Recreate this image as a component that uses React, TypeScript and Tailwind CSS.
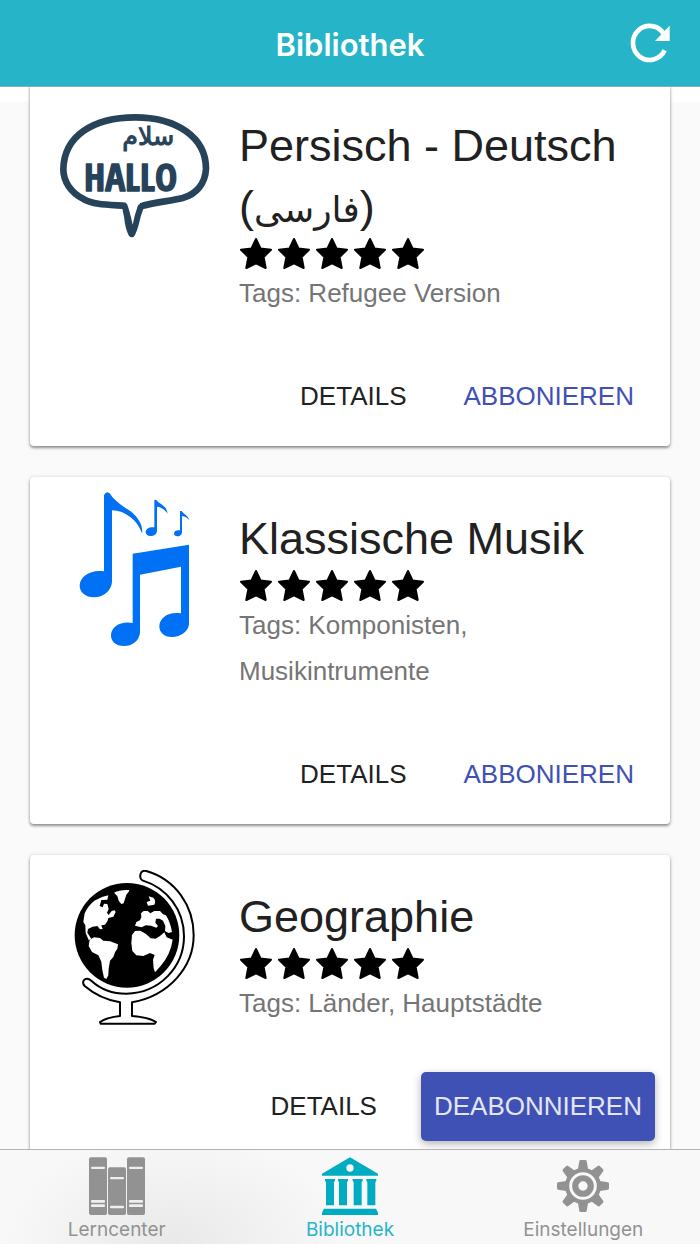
/**
 * Library screen: list of card decks that can be subscribed to.
 */

import type { ReactNode } from 'react';

interface Deck {
  title: string;
  nativeName?: string;
  tags: string;
  subscribed: boolean;
  picture: ReactNode;
}

interface Tab {
  label: string;
  href: string;
  active: boolean;
  icon: ReactNode;
}

function HelloPicture() {
  return (
    <svg viewBox="60 -3 450 480" className="h-40 w-[150px]" role="img" aria-label="Hallo">
      <path
        fill="none"
        stroke="#27435a"
        strokeWidth="20"
        strokeLinejoin="round"
        d="M258 318 C205 314 160 314 132 298 C92 278 70 244 70 208 C72 108 160 52 285 52 C410 52 498 112 498 206 C496 250 470 282 428 294 C388 304 345 306 302 319"
      />
      <path
        fill="#27435a"
        d="M244 312 Q253 306 261 312 Q268 328 278 374 Q284 344 294 316 Q300 308 312 314 Q310 330 302 350 Q290 402 281 410 Q274 415 267 408 Q256 388 252 350 Z"
      />
      <text
        x="272"
        y="272"
        textAnchor="middle"
        fill="#27435a"
        stroke="#27435a"
        strokeWidth="4"
        strokeLinejoin="round"
        fontSize="112"
        fontWeight="700"
        fontFamily="'Liberation Sans Narrow', 'Open Sans Condensed', 'DejaVu Sans Condensed', sans-serif"
      >
        HALLO
      </text>
      <text
        x="325"
        y="134"
        textAnchor="middle"
        fill="#27435a"
        stroke="#27435a"
        strokeWidth="3"
        fontSize="76"
        fontFamily="'DejaVu Sans', sans-serif"
      >
        سلام
      </text>
    </svg>
  );
}

function MusicPicture() {
  return (
    <svg viewBox="0 36 450 480" className="h-40 w-[150px]" fill="#0070f5" aria-hidden="true">
      <path d="M132 46 Q134 38 142 37 Q149 38 152 44 C165 64 192 80 212 94 C236 114 250 138 246 160 C232 120 196 92 156 91 L156 306 C154 332 130 352 102 352 C76 352 58 336 59 315 C61 290 90 268 132 274 Z" />
      <path d="M218 221 L387 194 L387 432 C386 454 362 471 336 471 C312 471 297 456 298 437 C300 412 326 394 363 400 L363 260 L240 284 L240 458 C238 482 216 498 192 498 C168 498 152 484 153 464 C155 440 182 422 218 429 Z" />
      <path d="M283 60 L288 59 C297 70 310 74 317 84 Q321 91 323 101 C313 88 303 81 291 80 L291 152 C290 162 282 168 272 168 C262 168 257 163 257 156 C258 146 268 140 283 142 Z" />
      <path d="M360 93 L365 93 C370 102 385 107 388 120 C380 112 374 109 366 108 L366 158 C364 166 358 169 352 169 C346 169 342 165 342 160 C343 153 350 149 360 151 Z" />
    </svg>
  );
}

function GlobePicture() {
  return (
    <svg viewBox="0 30 450 480" className="h-40 w-[150px]" aria-hidden="true">
      <circle cx="201" cy="226" r="157" />
      <path
        fill="#fff"
        stroke="#000"
        strokeWidth="6"
        strokeLinejoin="round"
        d="M247 61 Q239 57 241 45 Q244 30 259 33 C346 58 401 137 401 226 C401 322 326 407 216 427 L216 468 Q265 472 288 486 L284 491 L122 491 L120 486 Q142 472 180 468 L180 427 C139 420 102 402 74 378 Q65 368 73 359 Q82 352 94 362 C122 388 162 401 199 401 C298 399 372 322 372 229 C372 150 322 84 247 61 Z"
      />
      <g fill="#fff">
        <path d="M74 160 Q82 140 103 122 L126 111 L145 106 L142 119 L124 120 L119 138 L128 142 L132 131 L142 132 L146 147 L141 158 L146 165 L155 153 L164 151 L167 156 L160 170 L145 174 L142 184 L135 194 L124 196 L128 207 L120 208 L112 198 L98 200 L84 207 L82 218 L88 227 L94 237 L86 240 L77 219 L76 196 L70 186 Z" />
        <path d="M162 98 Q180 88 208 90 Q207 98 199 104 L191 130 L184 132 L176 122 L172 108 Z" />
        <path d="M89 239 L102 232 L120 234 L130 242 L150 244 L174 253 L172 266 L165 277 L160 291 L150 302 L146 326 L145 346 L139 357 L132 353 L127 331 L124 305 L115 286 L96 276 L86 258 Z" />
        <path d="M266 109 L280 113 Q289 122 283 134 L264 137 L260 126 L271 122 Z" />
        <path d="M225 197 L229 186 L240 181 L244 172 L243 160 L251 153 L263 153 L271 160 L283 153 L300 153 L309 163 L318 166 Q331 187 336 216 L325 219 L315 213 L316 198 L309 182 L299 176 L288 176 L286 188 L294 198 L289 203 L273 197 L258 196 L244 202 Z" />
        <path d="M225 213 L241 212 L257 221 L272 235 L287 236 L300 228 L313 217 L320 232 L338 239 Q332 282 302 318 L285 337 L281 325 L279 299 L284 285 L270 279 L250 288 L229 286 L217 273 L214 250 L216 225 Z" />
      </g>
      <path
        fill="none"
        stroke="#fff"
        strokeWidth="3"
        d="M256 75 C318 96 361 156 361 226 C361 314 288 386 201 388"
      />
    </svg>
  );
}

function BooksIcon() {
  return (
    <svg viewBox="258 48 180 180" className="size-[60px]" fill="#929292" aria-hidden="true">
      <rect x="264" y="52" width="54" height="173" rx="6" />
      <rect x="321" y="82" width="54" height="143" rx="6" />
      <rect x="378" y="52" width="54" height="173" rx="6" />
      <g fill="#efefef">
        <rect x="270" y="80" width="42" height="7" rx="3" />
        <rect x="270" y="180" width="42" height="8" rx="3" />
        <rect x="270" y="193" width="42" height="8" rx="3" />
        <rect x="327" y="111" width="42" height="7" rx="3" />
        <rect x="327" y="197" width="42" height="8" rx="3" />
        <rect x="384" y="80" width="42" height="7" rx="3" />
        <rect x="384" y="180" width="42" height="8" rx="3" />
        <rect x="384" y="193" width="42" height="8" rx="3" />
      </g>
    </svg>
  );
}

function MuseumIcon() {
  const columns = [135, 174, 218, 259];

  return (
    <svg viewBox="120 48 180 180" className="size-[60px]" fill="#00acc1" aria-hidden="true">
      <path d="M210 52 L294 101 L294 107 L126 107 L126 101 Z" />
      <circle cx="210" cy="84" r="11" fill="#f8f8f8" />
      {columns.map(x => (
        <path key={x} d={`M${x} 117 h30 v5 l-3 5 v69 h-24 v-69 l-3 -5 Z`} />
      ))}
      <path d="M132 206 H288 L294 218 V225 H126 V218 Z" />
    </svg>
  );
}

function GearIcon() {
  const teeth = [0, 45, 90, 135, 180, 225, 270, 315];

  return (
    <svg viewBox="159 48 180 180" className="size-[60px]" fill="#929292" aria-hidden="true">
      {teeth.map(angle => (
        <path
          key={angle}
          d="M233 92 L238 63 Q239 60 242 60 H256 Q259 60 260 63 L265 92 Z"
          transform={`rotate(${angle} 249 138)`}
        />
      ))}
      <circle cx="249" cy="138" r="54" />
      <circle cx="249" cy="138" r="37" fill="none" stroke="#f8f8f8" strokeWidth="9" />
      <circle cx="249" cy="138" r="14" fill="#f8f8f8" />
    </svg>
  );
}

function Stars() {
  return (
    <div className="flex h-[33px] gap-[5px]" role="img" aria-label="5 Sterne">
      {[1, 2, 3, 4, 5].map(n => (
        <svg key={n} viewBox="0 0 33 33" className="size-[33px]">
          <path
            stroke="#000"
            strokeWidth="2"
            strokeLinejoin="round"
            d="M17 2 L21.5 11.5 L32 12.7 L24.6 20 L26.7 31 L17 26.4 L7.3 31 L9.4 20 L2 12.7 L12.5 11.5 Z"
          />
        </svg>
      ))}
    </div>
  );
}

const DECKS: Deck[] = [
  {
    title: 'Persisch - Deutsch',
    nativeName: 'فارسی',
    tags: 'Refugee Version',
    subscribed: false,
    picture: <HelloPicture />,
  },
  {
    title: 'Klassische Musik',
    tags: 'Komponisten, Musikintrumente',
    subscribed: false,
    picture: <MusicPicture />,
  },
  {
    title: 'Geographie',
    tags: 'Länder, Hauptstädte',
    subscribed: true,
    picture: <GlobePicture />,
  },
];

const TABS: Tab[] = [
  { label: 'Lerncenter', href: '#lerncenter', active: false, icon: <BooksIcon /> },
  { label: 'Bibliothek', href: '#bibliothek', active: true, icon: <MuseumIcon /> },
  { label: 'Einstellungen', href: '#einstellungen', active: false, icon: <GearIcon /> },
];

function DeckCard({ deck }: { deck: Deck }) {
  return (
    <article className="rounded-[4px] bg-white pb-[15px] shadow-[0_2px_3px_rgba(0,0,0,0.4),0_0_4px_rgba(0,0,0,0.12)]">
      <div className="flex items-start gap-[29px] px-[30px]">
        <div className="h-0 shrink-0 pt-[15px]">{deck.picture}</div>
        <div className="min-w-0 flex-1 pt-[31px]">
          <h2 className="text-[45px] leading-[61px] text-[#212121]">
            {deck.title}
            {deck.nativeName && (
              <>
                {' '}
                <span className="whitespace-nowrap">
                  (<bdi className="text-[36px] leading-none">{deck.nativeName}</bdi>)
                </span>
              </>
            )}
          </h2>
          <Stars />
          <p className="text-[26px] leading-[46px] text-[#757575]">{`Tags: ${deck.tags}`}</p>
        </div>
      </div>

      {/* Actions */}
      <div className="mt-[46px] flex justify-end gap-8 pr-[15px] text-[26px]">
        <button type="button" className="h-[69px] px-3 text-[#212121]">
          DETAILS
        </button>
        {deck.subscribed ? (
          <button
            type="button"
            className="h-[69px] rounded-[5px] bg-[#3f51b5] px-[13px] text-[#e3e6f5] shadow-[0_3px_8px_rgba(0,0,0,0.3)]"
          >
            DEABONNIEREN
          </button>
        ) : (
          <button type="button" className="mr-2 h-[69px] px-[13px] text-[#3f51b5]">
            ABBONIEREN
          </button>
        )}
      </div>
    </article>
  );
}

export default function App() {
  return (
    <div className="flex h-screen flex-col bg-white font-['Liberation_Sans','DejaVu_Sans',sans-serif]">
      <header className="z-10 grid h-[87px] shrink-0 grid-cols-[1fr_auto_1fr] items-center border-b border-[#8fa9ad] bg-[#26b5c8] px-[30px] font-['Inter',sans-serif] text-white">
        <h1 className="col-start-2 pt-1 text-[31px] font-semibold">Bibliothek</h1>
        <button type="button" aria-label="Aktualisieren" className="justify-self-end">
          <svg viewBox="28 36 120 120" className="size-10">
            <path
              fill="none"
              stroke="#fff"
              strokeWidth="14"
              d="M132 118 A50 51 0 1 1 130 70"
            />
            <path fill="#fff" d="M147 44 V90 H103 Z" />
          </svg>
        </button>
      </header>

      <main className="min-h-0 flex-1 overflow-y-auto bg-[linear-gradient(#fff_15px,#fafafa_15px)] [scrollbar-width:none]">
        <div className="-mt-[3px] flex flex-col gap-[31px] px-[30px]">
          {DECKS.map(deck => (
            <DeckCard key={deck.title} deck={deck} />
          ))}
        </div>
      </main>

      <nav className="z-10 grid shrink-0 grid-cols-3 border-t border-[#b2b2b2] bg-[#f8f8f8] bg-[radial-gradient(170px_110px_at_25%_100%,#e9e9e9,#f8f8f8)] pt-[6px] font-['Inter',sans-serif]">
        {TABS.map(tab => (
          <a
            key={tab.label}
            href={tab.href}
            aria-current={tab.active ? 'page' : undefined}
            className={`flex flex-col items-center text-[19px] leading-7 ${
              tab.active ? 'text-[#26b5c8]' : 'text-[#929292]'
            }`}
          >
            {tab.icon}
            {tab.label}
          </a>
        ))}
      </nav>
    </div>
  );
}
